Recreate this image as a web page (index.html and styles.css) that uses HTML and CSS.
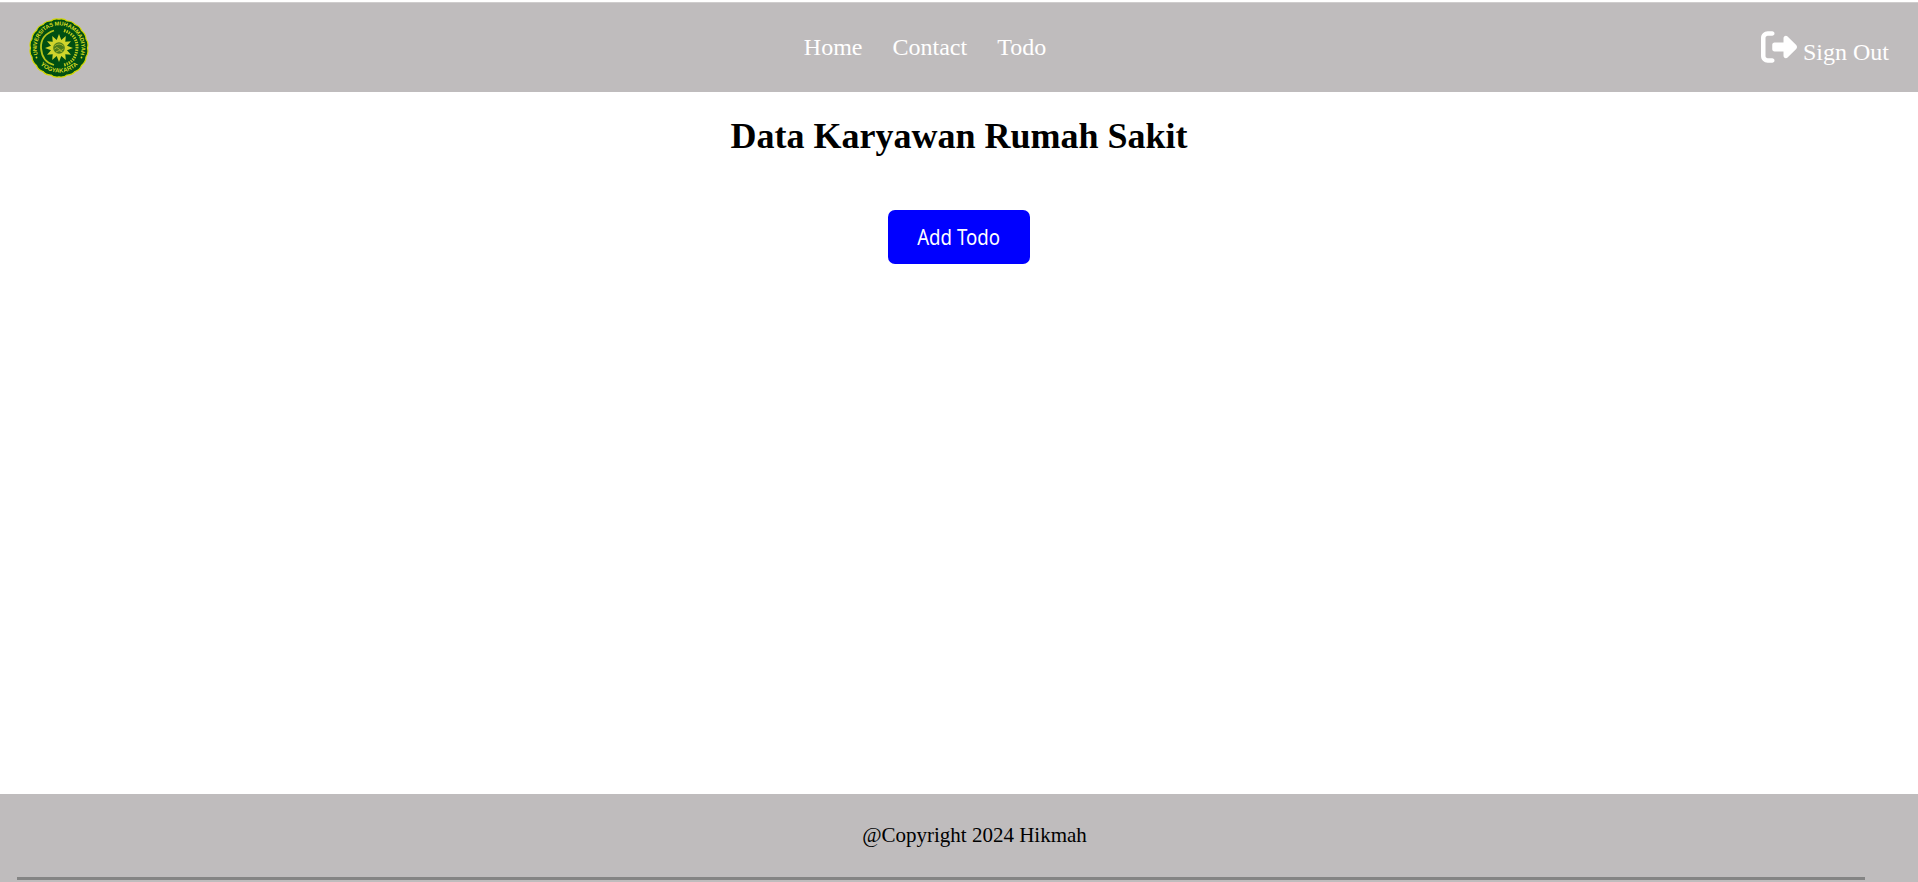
FILE: index.html
```html
<!DOCTYPE html>
<html lang="id">
<head>
<meta charset="utf-8">
<title>Data Karyawan Rumah Sakit</title>
<link rel="stylesheet" href="styles.css">
</head>
<body>
<header class="navbar">
  <svg class="logo" viewBox="0 0 60 60">
    <defs>
      <path id="arc-top" d="M10.200 40A22.300 22.300 0 1 1 49.800 40"/>
      <path id="arc-bottom" d="M7 40.500A25.800 25.800 0 0 0 53 40.500"/>
    </defs>
    <path class="rim" d="M30 1.200Q35 .2 38 3Q43 2.800 46 6.500Q51 8 52.500 12.500Q57 16 57 21Q60 25 58.500 30Q60 35 57 39Q57 44 52.500 47.500Q51 52 46 53.500Q43 57.200 38 57Q35 59.800 30 58.800Q25 59.800 22 57Q17 57.200 14 53.500Q9 52 7.500 47.500Q3 44 3 39Q0 35 1.500 30Q0 25 3 21Q3 16 7.500 12.500Q9 8 14 6.500Q17 2.800 22 3Q25 .2 30 1.200Z"/>
    <text class="ring-text"><textPath href="#arc-top" startOffset="50%" textLength="84" lengthAdjust="spacing">UNIVERSITAS MUHAMMADIYAH</textPath></text>
    <text class="ring-text ring-text-bottom"><textPath href="#arc-bottom" startOffset="50%" textLength="42" lengthAdjust="spacing">YOGYAKARTA</textPath></text>
    <path class="wreath" d="M25 12.500Q11.500 17 12 30Q13 44 25 47"/>
    <path class="wreath wreath-dots" d="M35 12.500Q48.500 17 48 30Q47 44 35 47"/>
    <path class="sun" d="M30 16L32.300 22L36.800 18L36.300 23.700L42 23.200L38 27.700L44 30L38 32.300L42 36.800L36.300 36.300L36.800 42L32.300 38L30 44L27.700 38L23.200 42L23.700 36.300L18 36.800L22 32.300L16 30L22 27.700L18 23.200L23.700 23.700L23.200 18L27.700 22Z"/>
    <circle class="core" cx="30" cy="30" r="5.8"/>
    <path class="script" d="M25.500 28Q30 24 34.500 28M25.500 31Q28 28 30 31T34.500 31M27 34Q30 31 33.500 34"/>
    <circle class="dot" cx="7.500" cy="39.500" r=".9"/>
    <circle class="dot" cx="52.500" cy="39.500" r=".9"/>
  </svg>
  <nav class="menu">
    <a>Home</a>
    <a>Contact</a>
    <a>Todo</a>
  </nav>
  <a class="signout"><svg class="signout-icon" viewBox="0 0 512 512"><path d="M377.900 105.900L500.700 228.700c7.200 7.200 11.300 17.100 11.300 27.300s-4.100 20.100-11.300 27.300L377.900 406.100c-6.400 6.400-15 9.900-24 9.900c-18.700 0-33.900-15.200-33.900-33.900l0-62.100-128 0c-17.700 0-32-14.300-32-32l0-64c0-17.700 14.300-32 32-32l128 0 0-62.100c0-18.700 15.200-33.900 33.900-33.900c9 0 17.600 3.600 24 9.900zM160 96L96 96c-17.700 0-32 14.300-32 32l0 256c0 17.700 14.300 32 32 32l64 0c17.700 0 32 14.300 32 32s-14.300 32-32 32l-64 0c-53 0-96-43-96-96L0 128C0 75 43 32 96 32l64 0c17.700 0 32 14.300 32 32s-14.300 32-32 32z"/></svg> Sign Out</a>
</header>
<main class="content">
  <h1 class="title">Data Karyawan Rumah Sakit</h1>
  <button class="add-button" type="button"><span class="add-label">Add Todo</span></button>
</main>
<footer class="footer">
  <p class="copyright">@Copyright 2024 Hikmah</p>
  <div class="rule"></div>
</footer>
</body>
</html>
```
FILE: styles.css
```css
* {
  box-sizing: border-box;
}

body {
  margin: 0;
  padding-top: 2px;
  height: 882px;
  display: flex;
  flex-direction: column;
  overflow: hidden;
  background: #fff;
  font-family: "Liberation Serif", "Times New Roman", serif;
}

.navbar {
  height: 90px;
  padding: 0 29px;
  display: flex;
  align-items: center;
  justify-content: space-between;
  background: #bfbcbd;
  border-top: 1px solid #cfcdcd;
  color: #fff;
  font-size: 24px;
}

.logo {
  width: 60px;
  height: 60px;
}

.rim {
  fill: #004f12;
  stroke: #d3d800;
  stroke-width: 1.2;
}

.ring-text {
  fill: #d8dc20;
  font: bold 5.6px "Liberation Sans", Arial, sans-serif;
  text-anchor: middle;
}

.ring-text-bottom {
  font-size: 6px;
}

.wreath {
  fill: none;
  stroke: #b5c51c;
  stroke-width: 1.8;
}

.wreath-dots {
  stroke-width: 3;
  stroke-dasharray: 1.5 1;
}

.sun {
  fill: #d0d42c;
}

.core {
  fill: #4c7c1c;
}

.script {
  fill: none;
  stroke: #c0c82c;
  stroke-width: .8;
}

.dot {
  fill: #d8dc20;
}

.menu {
  display: flex;
  gap: 30px;
}

.signout {
  padding-bottom: 1px;
}

.signout-icon {
  width: 36px;
  height: 36px;
  fill: #fff;
  vertical-align: -5px;
}

.content {
  flex: 1;
  display: flex;
  flex-direction: column;
  align-items: center;
}

.title {
  margin: 24px 0 53px;
  font-size: 36px;
  line-height: 41px;
}

.add-button {
  width: 142px;
  height: 54px;
  padding: 0;
  border: 0;
  border-radius: 7px;
  background: #00f;
  color: #fff;
  font: 21px "Noto Sans", sans-serif;
}

.add-label {
  display: inline-block;
  transform: scaleX(.89);
}

.footer {
  height: 88px;
  padding: 30px 53px 2px 17px;
  display: flex;
  flex-direction: column;
  justify-content: space-between;
  background: #bfbcbd;
}

.copyright {
  margin: 0;
  padding-left: 67px;
  width: 100%;
  text-align: center;
  font-size: 21px;
  line-height: 23px;
}

.rule {
  height: 3px;
  background: #848484;
}
```
